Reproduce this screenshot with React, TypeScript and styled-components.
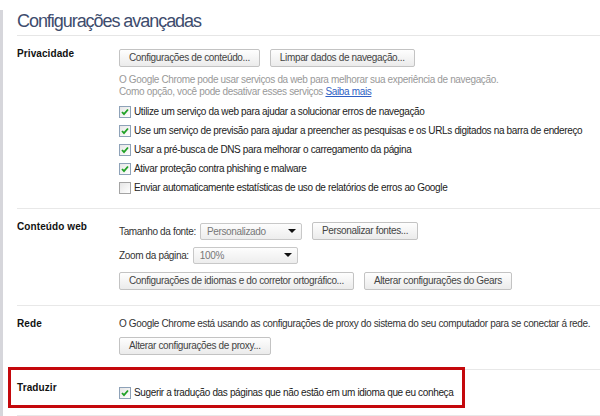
import React from 'react';
import styled, { createGlobalStyle } from 'styled-components';

const GlobalStyle = createGlobalStyle`
    html, body {
        margin: 0;
        padding: 0;
        background: #fff;
    }
    body {
        width: 600px;
        height: 416px;
        overflow: hidden;
        font-family: "Liberation Sans", Arial, sans-serif;
        font-size: 10px;
        letter-spacing: -0.35px;
        color: #222;
    }
`;

const Page = styled.div`
    box-sizing: border-box;
    height: 416px;
    border-left: 3px solid #d6d6db;
    padding-left: 14px;
`;

const Title = styled.h1`
    margin: 10px 0 0;
    padding-bottom: 2px;
    font-weight: normal;
    font-size: 18px;
    letter-spacing: -1.05px;
    line-height: 23px;
    color: #3d4c6d;
    border-bottom: 1px solid #e6e6e6;
`;

const Section = styled.section<{ $bottom: number }>`
    position: relative;
    display: grid;
    grid-template-columns: 102px 1fr;
    padding: 12px 0 ${(p) => p.$bottom}px;
    border-bottom: 1px solid #e8e8e8;
`;

const Label = styled.div`
    font-weight: bold;
    font-size: 10px;
    letter-spacing: 0.1px;
    line-height: 12px;
    color: #111;
`;

const Content = styled.div`
    display: flex;
    flex-direction: column;
    align-items: flex-start;
    white-space: nowrap;
`;

const Row = styled.div<{ $top?: number }>`
    display: flex;
    align-items: center;
    gap: 10px;
    height: 18px;
    margin-top: ${(p) => p.$top ?? 0}px;
`;

const Button = styled.button`
    box-sizing: border-box;
    height: 18px;
    padding: 0 9px;
    border: 1px solid #c3c3c3;
    border-radius: 2px;
    background: linear-gradient(#fefefe, #ebebeb);
    font: inherit;
    letter-spacing: inherit;
    line-height: 16px;
    color: #444;
`;

const Description = styled.p`
    margin: 7px 0 0;
    line-height: 12px;
    color: #999;
`;

const Link = styled.a`
    color: #2f5fc4;
    text-decoration: underline;
`;

const CheckList = styled.div<{ $top: number }>`
    display: flex;
    flex-direction: column;
    margin-top: ${(p) => p.$top}px;
`;

const CheckRow = styled.label`
    display: flex;
    align-items: center;
    gap: 3px;
    height: 19px;
    color: #222;
`;

const Box = styled.span<{ $checked: boolean }>`
    box-sizing: border-box;
    display: flex;
    align-items: center;
    justify-content: center;
    width: 12px;
    height: 12px;
    border: 1px solid ${(p) => (p.$checked ? '#8ea2b8' : '#a4a4a4')};
    background: linear-gradient(135deg, #e6e6e6, #ffffff);
`;

const Field = styled.div`
    display: flex;
    align-items: center;
    gap: 4px;
    color: #333;
`;

const Select = styled.div<{ $width: number }>`
    box-sizing: border-box;
    display: flex;
    align-items: center;
    justify-content: space-between;
    width: ${(p) => p.$width}px;
    height: 17px;
    padding: 0 5px 0 6px;
    border: 1px solid #c8c8c8;
    border-radius: 2px;
    background: linear-gradient(#fdfdfd, #ededed);
    color: #777;
`;

const Arrow = styled.span`
    width: 0;
    height: 0;
    border-left: 4px solid transparent;
    border-right: 4px solid transparent;
    border-top: 4px solid #111;
`;

const Text = styled.div`
    line-height: 12px;
    color: #333;
`;

const Highlight = styled.div`
    position: absolute;
    left: -9px;
    top: -3px;
    box-sizing: border-box;
    width: 457px;
    height: 41px;
    border: 3px solid #c4080c;
    pointer-events: none;
`;

const Check = ({ checked, children }: { checked: boolean; children: React.ReactNode }) => (
    <CheckRow>
        <Box $checked={checked}>
            {checked && (
                <svg width="8" height="8" viewBox="0 0 8 8">
                    <path d="M1 4 L3 6.2 L7 1.5" fill="none" stroke="#1fa125" strokeWidth="1.8" />
                </svg>
            )}
        </Box>
        {children}
    </CheckRow>
);

const privacyOptions = [
    { checked: true, text: 'Utilize um serviço da web para ajudar a solucionar erros de navegação' },
    {
        checked: true,
        text: 'Use um serviço de previsão para ajudar a preencher as pesquisas e os URLs digitados na barra de endereço',
    },
    { checked: true, text: 'Usar a pré-busca de DNS para melhorar o carregamento da página' },
    { checked: true, text: 'Ativar proteção contra phishing e malware' },
    { checked: false, text: 'Enviar automaticamente estatísticas de uso de relatórios de erros ao Google' },
];

export default function App() {
    return (
        <>
            <GlobalStyle />
            <Page>
                <Title>Configurações avançadas</Title>

                <Section $bottom={11}>
                    <Label>Privacidade</Label>
                    <Content>
                        <Row $top={1}>
                            <Button>Configurações de conteúdo...</Button>
                            <Button>Limpar dados de navegação...</Button>
                        </Row>
                        <Description>
                            O Google Chrome pode usar serviços da web para melhorar sua experiência de navegação.
                            <br />
                            Como opção, você pode desativar esses serviços <Link href="#">Saiba mais</Link>
                        </Description>
                        <CheckList $top={4}>
                            {privacyOptions.map((o) => (
                                <Check key={o.text} checked={o.checked}>
                                    {o.text}
                                </Check>
                            ))}
                        </CheckList>
                    </Content>
                </Section>

                <Section $bottom={15}>
                    <Label>Conteúdo web</Label>
                    <Content>
                        <Row $top={1}>
                            <Field>
                                Tamanho da fonte:
                                <Select $width={102}>
                                    Personalizado
                                    <Arrow />
                                </Select>
                            </Field>
                            <Button>Personalizar fontes...</Button>
                        </Row>
                        <Row $top={6}>
                            <Field>
                                Zoom da página:
                                <Select $width={105}>
                                    100%
                                    <Arrow />
                                </Select>
                            </Field>
                        </Row>
                        <Row $top={8}>
                            <Button>Configurações de idiomas e do corretor ortográfico...</Button>
                            <Button>Alterar configurações do Gears</Button>
                        </Row>
                    </Content>
                </Section>

                <Section $bottom={14}>
                    <Label>Rede</Label>
                    <Content>
                        <Text>
                            O Google Chrome está usando as configurações de proxy do sistema do seu computador para
                            se conectar á rede.
                        </Text>
                        <Row $top={7}>
                            <Button>Alterar configurações de proxy...</Button>
                        </Row>
                    </Content>
                </Section>

                <Section $bottom={13}>
                    <Highlight />
                    <Label>Traduzir</Label>
                    <Content>
                        <CheckList $top={1}>
                            <Check checked>
                                Sugerir a tradução das páginas que não estão em um idioma que eu conheça
                            </Check>
                        </CheckList>
                    </Content>
                </Section>
            </Page>
        </>
    );
}
